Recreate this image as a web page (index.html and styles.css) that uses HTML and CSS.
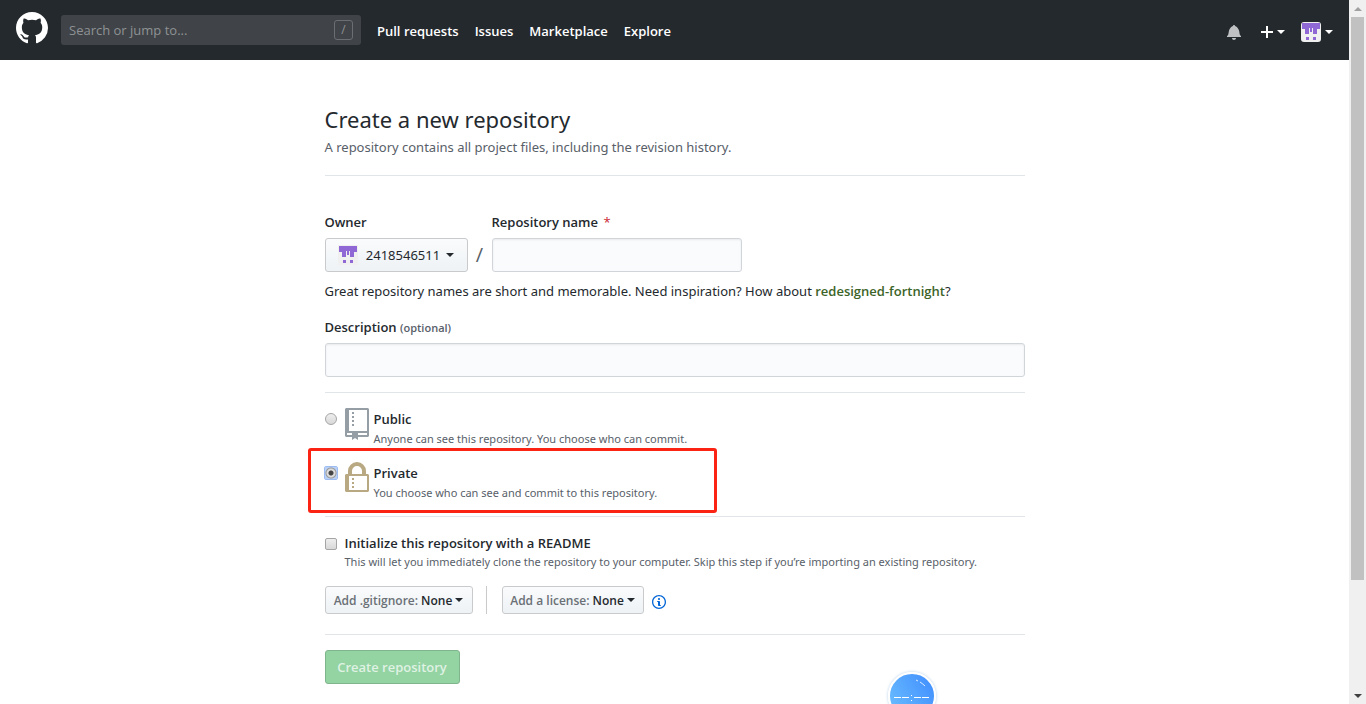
FILE: index.html
```html
<!DOCTYPE html>
<html lang="en">
<head>
    <meta charset="UTF-8">
    <meta name="viewport" content="width=device-width, initial-scale=1">
    <title>Create a New Repository</title>
    <link rel="stylesheet" href="styles.css">
</head>
<body>
<svg class="sprite" aria-hidden="true">
    <symbol id="identicon" viewBox="0 0 20 20">
        <rect width="20" height="20" fill="#f0f0f0"/>
        <path fill="#9068d6" d="M1 1h18v6h-3v5h-4V6h-1v4H9V6H8v6H4V7H1zM5 15h3v3H5zM12 15h3v3h-3z"/>
    </symbol>
</svg>
<div class="page">
    <header class="header">
        <a href="#" class="logo" aria-label="Homepage">
            <svg width="32" height="32" viewBox="0 0 16 16" fill="#fff"><path fill-rule="evenodd" d="M8 0C3.58 0 0 3.58 0 8c0 3.54 2.29 6.53 5.47 7.59.4.07.55-.17.55-.38 0-.19-.01-.82-.01-1.49-2.01.37-2.53-.49-2.69-.94-.09-.23-.48-.94-.82-1.13-.28-.15-.68-.52-.01-.53.63-.01 1.08.58 1.23.82.72 1.21 1.87.87 2.33.66.07-.52.28-.87.51-1.07-1.78-.2-3.64-.89-3.64-3.95 0-.87.31-1.59.82-2.15-.08-.2-.36-1.02.08-2.12 0 0 .67-.21 2.2.82.64-.18 1.32-.27 2-.27.68 0 1.36.09 2 .27 1.53-1.04 2.2-.82 2.2-.82.44 1.1.16 1.92.08 2.12.51.56.82 1.27.82 2.15 0 3.07-1.87 3.75-3.65 3.95.29.25.54.73.54 1.48 0 1.07-.01 1.93-.01 2.2 0 .21.15.46.55.38A8.013 8.013 0 0 0 16 8c0-4.42-3.58-8-8-8z"/></svg>
        </a>
        <div class="search">
            <input type="text" placeholder="Search or jump to..." aria-label="Search or jump to">
            <span class="slash-key">/</span>
        </div>
        <nav class="nav">
            <a href="#">Pull requests</a>
            <a href="#">Issues</a>
            <a href="#">Marketplace</a>
            <a href="#">Explore</a>
        </nav>
        <div class="user-nav">
            <a href="#" class="bell" aria-label="Notifications">
                <svg width="14" height="16" viewBox="0 0 14 16" fill="#bfc1c3"><path d="M14 12v1H0v-1l.73-.58c.77-.77.81-2.55 1.19-4.42C2.69 3.23 6 2 6 2c0-.55.45-1 1-1s1 .45 1 1c0 0 3.39 1.23 4.16 5 .38 1.88.42 3.66 1.19 4.42l.66.58H14zm-7 4c1.11 0 2-.89 2-2H5c0 1.11.89 2 2 2z"/></svg>
            </a>
            <a href="#" aria-label="Create new">
                <svg width="12" height="16" viewBox="0 0 12 16" fill="#fff"><path d="M12 9H7v5H5V9H0V7h5V2h2v5h5v2z"/></svg>
                <span class="caret"></span>
            </a>
            <a href="#" aria-label="Profile">
                <svg class="avatar" width="20" height="20"><use href="#identicon"/></svg>
                <span class="caret"></span>
            </a>
        </div>
    </header>

    <main class="container">
        <div class="subhead">
            <h1>Create a new repository</h1>
            <p>A repository contains all project files, including the revision history.</p>
        </div>
        <form>
            <div class="name-row">
                <div class="field">
                    <label for="owner">Owner</label>
                    <button type="button" id="owner" class="btn btn-owner">
                        <svg width="20" height="20"><use href="#identicon"/></svg>
                        <span>2418546511</span>
                        <span class="caret"></span>
                    </button>
                </div>
                <span class="slash">/</span>
                <div class="field">
                    <label for="name">Repository name <span class="required">*</span></label>
                    <input type="text" id="name" class="text name">
                </div>
            </div>
            <p class="hint">Great repository names are short and memorable. Need inspiration? How about <strong>redesigned-fortnight</strong>?</p>
            <div class="field description">
                <label for="desc">Description <small>(optional)</small></label>
                <input type="text" id="desc" class="text">
            </div>

            <div class="section visibility">
                <div class="option">
                    <input type="radio" name="visibility" id="public">
                    <svg width="24" height="32" viewBox="0 0 24 32" fill="#959da5"><path fill-rule="evenodd" d="M1 0h22l1 1v27l-1 1H13v3l-3-2-3 2v-3H1l-1-1V1zM4 2v21h18V2zM2 25v2h5v-2zM13 25v2h9v-2zM7 4h2v2H7zM7 8h2v2H7zM7 12h2v2H7zM7 16h2v2H7z"/></svg>
                    <div class="option-text">
                        <label for="public">Public</label>
                        <p>Anyone can see this repository. You choose who can commit.</p>
                    </div>
                </div>
                <div class="option marked">
                    <input type="radio" name="visibility" id="private" class="focused" checked>
                    <svg width="24" height="32" viewBox="0 0 24 32" fill="#b9a982"><path fill-rule="evenodd" d="M1 12h2V9a9 9 0 0 1 18 0v3h2l1 1v16l-1 1H1l-1-1V13zM7 12h10V9A5 5 0 0 0 7 9zM4 14v14h18V14zM7 16h2v2H7zM7 20h2v2H7zM7 24h2v2H7z"/></svg>
                    <div class="option-text">
                        <label for="private">Private</label>
                        <p>You choose who can see and commit to this repository.</p>
                    </div>
                </div>
            </div>

            <div class="section init">
                <div class="option">
                    <input type="checkbox" id="readme">
                    <div class="option-text">
                        <label for="readme">Initialize this repository with a README</label>
                        <p>This will let you immediately clone the repository to your computer. Skip this step if you’re importing an existing repository.</p>
                    </div>
                </div>
                <div class="extras">
                    <button type="button" class="btn btn-sm btn-ignore"><i>Add .gitignore:</i> <span>None</span><span class="caret"></span></button>
                    <span class="divider"></span>
                    <button type="button" class="btn btn-sm btn-license"><i>Add a license:</i> <span>None</span><span class="caret"></span></button>
                    <a href="#" class="info" aria-label="About licenses">
                        <svg width="14" height="16" viewBox="0 0 14 16" fill="#0366d6"><path fill-rule="evenodd" d="M6.3 5.69a.942.942 0 0 1-.28-.7c0-.28.09-.52.28-.7.19-.18.42-.28.7-.28.28 0 .52.09.7.28.18.19.28.42.28.7 0 .28-.09.52-.28.7a1 1 0 0 1-.7.3c-.28 0-.52-.11-.7-.3zM8 7.99c-.02-.25-.11-.48-.31-.69-.2-.19-.42-.3-.69-.31H6c-.27.02-.48.13-.69.31-.2.2-.3.44-.31.69h1v3c.02.27.11.5.31.69.2.2.42.31.69.31h1c.27 0 .48-.11.69-.31.2-.19.3-.42.31-.69H8V7.98v.01zM7 2.3c-3.14 0-5.7 2.54-5.7 5.68 0 3.14 2.56 5.7 5.7 5.7s5.7-2.55 5.7-5.7c0-3.15-2.56-5.69-5.7-5.69v.01zM7 .98c3.86 0 7 3.14 7 7s-3.14 7-7 7-7-3.12-7-7 3.14-7 7-7z"/></svg>
                    </a>
                </div>
            </div>

            <div class="section submit">
                <button type="submit" class="btn btn-primary" disabled>Create repository</button>
            </div>
        </form>
    </main>
</div>
<div class="scrollbar" aria-hidden="true">
    <span class="arrow up"></span>
    <div class="track"><div class="thumb"></div></div>
    <span class="arrow down"></span>
</div>
<div class="ball" aria-hidden="true">
    <svg width="44" height="44" viewBox="0 0 44 44" fill="none" stroke="#fff">
        <path d="M4 23.500h7M12 23.500h7M24 23.500h7M32 23.500h7"/>
        <path d="M21 21.500h1M21 26.500h1"/>
        <path d="M26 6l2 1M30 8q3 2 5 4" opacity=".8"/>
    </svg>
</div>
</body>
</html>
```
FILE: styles.css
```css
*,*::after{
    box-sizing:border-box;
}
body{
    display:flex;
    height:100vh;
    margin:0;
    overflow:hidden;
    background:#fff;
    color:#24292e;
    font-family:"Segoe UI","Open Sans","Noto Sans",sans-serif;
    font-size:13px;
    line-height:20px;
}
h1,p{
    margin:0;
    font-family:"Segoe UI","Noto Sans","Open Sans",sans-serif;
    font-weight:400;
}
input,button{
    margin:0;
    font-family:inherit;
}
svg{
    display:block;
    flex:none;
}
a{
    color:inherit;
    text-decoration:none;
}
.sprite{
    position:absolute;
    width:0;
    height:0;
}
.page{
    flex:1;
    min-width:0;
}
.caret{
    flex:none;
    border:4px solid transparent;
    border-top-color:currentColor;
    border-bottom:0;
}

/* header */
.header{
    display:flex;
    align-items:center;
    height:60px;
    padding:0 16px;
    background:#24292e;
    color:#fff;
}
.logo{
    margin:0 13px 4px 0;
}
.search{
    display:flex;
    align-items:center;
    width:300px;
    height:30px;
    padding:0 8px;
    border-radius:3px;
    background:#404448;
}
.search input{
    flex:1;
    min-width:0;
    padding:0;
    border:0;
    outline:0;
    background:none;
    color:#fff;
    font-size:13px;
}
.search input::placeholder{
    color:#8f9294;
}
.slash-key{
    width:19px;
    height:20px;
    border:1px solid #6b6f73;
    border-radius:3px;
    color:#8f9294;
    font-size:12px;
    line-height:18px;
    text-align:center;
}
.nav{
    display:flex;
    gap:16px;
    margin:2px 0 0 16px;
    font-weight:600;
}
.user-nav{
    display:flex;
    gap:16px;
    margin:4px 0 0 auto;
}
.user-nav a{
    display:flex;
    align-items:center;
    gap:4px;
}
.user-nav .bell{
    margin-right:4px;
}
.avatar{
    border-radius:3px;
}

/* form */
.container{
    max-width:700px;
    margin:0 auto;
    padding-top:43px;
}
.subhead{
    padding-bottom:17px;
    border-bottom:1px solid #e1e4e8;
}
.subhead h1{
    margin-bottom:2px;
    font-size:22px;
    line-height:32px;
}
.subhead p{
    color:#586069;
    line-height:21px;
}
.name-row{
    display:flex;
    align-items:flex-end;
    margin-top:36px;
}
.field{
    display:flex;
    flex-direction:column;
    gap:6px;
}
.field label,.option label{
    font-weight:600;
}
.required{
    margin-left:2px;
    color:#cb2431;
    font-weight:400;
}
.field small{
    color:#586069;
    font-size:11px;
    line-height:1;
}
.btn{
    display:flex;
    align-items:center;
    justify-content:center;
    height:34px;
    padding:0 12px;
    border:1px solid #c8cacc;
    border-radius:3px;
    background:linear-gradient(#fafbfc,#eff3f6 90%);
    color:#24292e;
    font-size:13px;
    font-weight:600;
    white-space:nowrap;
}
.btn-owner{
    width:143px;
    font-family:"Segoe UI","Noto Sans",sans-serif;
    font-weight:400;
}
.btn-owner svg{
    margin-right:8px;
}
.btn-owner .caret{
    margin-left:6px;
}
.slash{
    width:24px;
    color:#586069;
    font-size:20px;
    line-height:34px;
    text-align:center;
}
.text{
    width:100%;
    height:34px;
    padding:0 8px;
    border:1px solid #d1d5da;
    border-radius:3px;
    outline:0;
    background:#fafbfc;
    box-shadow:inset 0 1px 2px rgba(27,31,35,.075);
    font-size:13px;
}
.name{
    width:250px;
}
.hint{
    margin-top:9px;
}
.hint strong{
    color:#3c6428;
    font-family:"Segoe UI","Open Sans",sans-serif;
    font-weight:600;
}
.description{
    margin-top:16px;
}
.section{
    margin-top:15px;
    border-top:1px solid #e1e4e8;
}
.option{
    display:flex;
    position:relative;
}
.option p{
    color:#586069;
    font-size:11px;
    line-height:18px;
}
.option svg{
    margin:0 5px 0 8px;
}
.visibility{
    display:flex;
    flex-direction:column;
    gap:14px;
    padding-top:15px;
}
.visibility label{
    display:block;
    line-height:22px;
}
.marked::after{
    content:"";
    position:absolute;
    top:-14px;
    left:-17px;
    width:409px;
    height:65px;
    border:3px solid #fb2313;
    border-radius:3px;
    pointer-events:none;
}
input[type=radio],input[type=checkbox]{
    flex:none;
    width:12px;
    height:12px;
    margin-top:5px;
    border:1px solid #a5a5a5;
    border-radius:50%;
    background:linear-gradient(#eee,#d8d8d8);
    appearance:none;
}
input[type=checkbox]{
    margin-right:8px;
    border-radius:2px;
}
input[type=radio].focused{
    border:0;
    border-radius:1px;
    outline:1px solid #9cbcf2;
    background:#b9d0f7 radial-gradient(circle,#444 0 2px,#ddd 3px 4px,#999 5px,#b9d0f7 6px);
}
.init{
    margin-top:14px;
    padding-top:16px;
}
.extras{
    display:flex;
    align-items:center;
    margin:15px 0 20px;
}
.btn-sm{
    gap:3px;
    height:28px;
    padding:0 10px;
    font-size:12px;
}
.btn-sm i{
    color:#6a7076;
    font-style:normal;
}
.btn-ignore{
    width:148px;
}
.btn-license{
    width:142px;
}
.divider{
    width:1px;
    height:28px;
    margin:0 15px 0 13px;
    background:#c8cacc;
}
.info{
    margin:4px 0 0 8px;
}
.submit{
    margin-top:0;
    padding-top:15px;
}
.btn-primary{
    width:135px;
    border-color:#7fb58d;
    background:#94d3a2;
    color:#dff2e3;
}

/* scrollbar */
.scrollbar{
    display:flex;
    flex:none;
    flex-direction:column;
    width:17px;
    background:#f0f0f0;
}
.arrow{
    display:flex;
    align-items:center;
    justify-content:center;
    height:17px;
}
.arrow::before{
    content:"";
    border:4px solid transparent;
}
.up::before{
    border-top:0;
    border-bottom-color:#a0a0a0;
}
.down::before{
    border-top-color:#404040;
    border-bottom:0;
}
.track{
    flex:1;
    padding:0 2px;
}
.thumb{
    height:84%;
    background:#c1c1c1;
}

/* floating ball */
.ball{
    position:fixed;
    bottom:-16px;
    left:calc(50% + 205px);
    width:48px;
    height:48px;
    border:2px solid #fff;
    border-radius:50%;
    background:linear-gradient(60deg,#6cc0ff,#3f8cff);
    box-shadow:0 0 3px rgba(60,130,200,.4);
}
```
